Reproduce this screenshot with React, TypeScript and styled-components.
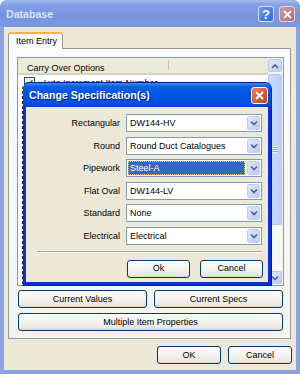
import React from 'react';
import styled, { createGlobalStyle, css } from 'styled-components';

const GlobalStyle = createGlobalStyle`
    html, body {
        margin: 0;
        padding: 0;
        background: #ffffff;
    }
    body {
        font-family: 'Liberation Sans', Arial, sans-serif;
        font-size: 9px;
        color: #000;
    }
`;

const specs = [
    { label: 'Rectangular', value: 'DW144-HV' },
    { label: 'Round', value: 'Round Duct Catalogues' },
    { label: 'Pipework', value: 'Steel-A', selected: true },
    { label: 'Flat Oval', value: 'DW144-LV' },
    { label: 'Standard', value: 'None' },
    { label: 'Electrical', value: 'Electrical' },
];

const Chevron = ({ up = false }: { up?: boolean }) => (
    <svg width='8' height='6' viewBox='0 0 8 6'>
        <polyline
            points={up ? '1,5 4,2 7,5' : '1,1.5 4,4.5 7,1.5'}
            fill='none'
            stroke='#4d6185'
            strokeWidth='1.6'
        />
    </svg>
);

const CloseGlyph = ({ size = 9 }: { size?: number }) => (
    <svg width={size} height={size} viewBox='0 0 9 9'>
        <path d='M1 1 L8 8 M8 1 L1 8' stroke='#fff' strokeWidth='1.8' />
    </svg>
);

export default function App() {
    return (
        <>
            <GlobalStyle />
            <Window>
                <TitleBar>
                    <TitleText $inactive>Database</TitleText>
                    <CaptionButtons>
                        <CaptionButton $kind='help'>?</CaptionButton>
                        <CaptionButton $kind='close-inactive'>
                            <CloseGlyph />
                        </CaptionButton>
                    </CaptionButtons>
                </TitleBar>
                <Client>
                    <TabStrip>
                        <Tab>Item Entry</Tab>
                    </TabStrip>
                    <TabPanel>
                        <ListView>
                            <ListBody>
                                <HeaderRow>
                                    <HeaderCell $width={151}>Carry Over Options</HeaderCell>
                                    <HeaderCell />
                                </HeaderRow>
                                <ListRow>
                                    <CheckBox>
                                        <svg width='7' height='7' viewBox='0 0 7 7'>
                                            <polyline
                                                points='0.5,3.5 2.5,5.5 6.5,1'
                                                fill='none'
                                                stroke='#21a121'
                                                strokeWidth='1.6'
                                            />
                                        </svg>
                                    </CheckBox>
                                    Auto Increment Item Number
                                </ListRow>
                            </ListBody>
                            <ScrollBar>
                                <ScrollButton>
                                    <Chevron up />
                                </ScrollButton>
                                <ScrollTrack>
                                    <ScrollThumb>
                                        <Grip />
                                    </ScrollThumb>
                                </ScrollTrack>
                                <ScrollButton>
                                    <Chevron />
                                </ScrollButton>
                            </ScrollBar>
                        </ListView>
                        <ButtonGrid>
                            <Button>Current Values</Button>
                            <Button>Current Specs</Button>
                            <Button $span>Multiple Item Properties</Button>
                        </ButtonGrid>
                    </TabPanel>
                    <DialogButtons>
                        <Button $width={64}>OK</Button>
                        <Button $width={64}>Cancel</Button>
                    </DialogButtons>
                </Client>

                <Modal>
                    <ModalTitleBar>
                        <TitleText>Change Specification(s)</TitleText>
                        <CaptionButton $kind='close'>
                            <CloseGlyph />
                        </CaptionButton>
                    </ModalTitleBar>
                    <ModalClient>
                        <SpecGrid>
                            {specs.map((s) => (
                                <React.Fragment key={s.label}>
                                    <SpecLabel>{s.label}</SpecLabel>
                                    <Combo>
                                        <ComboText $selected={s.selected}>{s.value}</ComboText>
                                        <ComboButton>
                                            <Chevron />
                                        </ComboButton>
                                    </Combo>
                                </React.Fragment>
                            ))}
                        </SpecGrid>
                        <Separator />
                        <ModalButtons>
                            <Button $width={63}>Ok</Button>
                            <Button $width={63}>Cancel</Button>
                        </ModalButtons>
                    </ModalClient>
                </Modal>
            </Window>
        </>
    );
}

const Window = styled.div`
    position: relative;
    width: 300px;
    height: 374px;
    display: flex;
    flex-direction: column;
    background: #8ca3e4;
    border-radius: 7px 7px 0 0;
    overflow: hidden;
`;

const TitleBar = styled.div`
    height: 27px;
    display: flex;
    align-items: center;
    justify-content: space-between;
    padding: 0 5px 0 6px;
    background: linear-gradient(#a3bbf0 0%, #839fe6 18%, #7893e0 60%, #7d99e2 100%);
`;

const TitleText = styled.span<{ $inactive?: boolean }>`
    font-family: 'Liberation Sans', Arial, sans-serif;
    font-weight: bold;
    font-size: 10.6px;
    color: ${(p) => (p.$inactive ? '#d8e4f8' : '#ffffff')};
    text-shadow: ${(p) => (p.$inactive ? 'none' : '1px 1px 0 #0a1f7a')};
`;

const CaptionButtons = styled.div`
    display: flex;
    gap: 5px;
    margin-top: 1px;
`;

const CaptionButton = styled.div<{ $kind: 'help' | 'close' | 'close-inactive' }>`
    width: 16px;
    height: 16px;
    box-sizing: border-box;
    border: 1px solid #ffffff;
    border-radius: 3px;
    display: flex;
    align-items: center;
    justify-content: center;
    color: #ffffff;
    font-weight: bold;
    font-size: 13px;
    ${(p) =>
        p.$kind === 'help'
            ? css`
                  background: linear-gradient(135deg, #6b9bf5, #2d67e0);
                  border-color: #dce6fb;
              `
            : p.$kind === 'close-inactive'
            ? css`
                  background: linear-gradient(135deg, #d49a9a, #b46a73);
                  border-color: #e7d4dc;
              `
            : css`
                  width: 17px;
                  height: 17px;
                  background: linear-gradient(135deg, #e9805f, #c5421e);
              `}
`;

const Client = styled.div`
    flex: 1;
    margin: 0 4px 4px;
    background: #ece9d8;
    display: flex;
    flex-direction: column;
    padding: 5px 5px 6px 4px;
`;

const TabStrip = styled.div`
    display: flex;
    height: 16px;
    position: relative;
    z-index: 1;
`;

const Tab = styled.div`
    width: 55px;
    height: 17px;
    box-sizing: border-box;
    border: 1px solid #919b9c;
    border-bottom: none;
    border-top: 2px solid #f7b63a;
    border-radius: 3px 3px 0 0;
    background: #fcfcfe;
    padding: 2px 0 0 7px;
`;

const TabPanel = styled.div`
    height: 291px;
    box-sizing: border-box;
    border: 1px solid #919b9c;
    background: linear-gradient(#fcfcfe, #f4f3ee);
    padding: 8px 6px 7px 8px;
    display: flex;
    flex-direction: column;
    gap: 4px;
`;

const ListView = styled.div`
    height: 229px;
    box-sizing: border-box;
    border: 1px solid #7f9db9;
    background: #ffffff;
    display: flex;
`;

const ListBody = styled.div`
    flex: 1;
    display: flex;
    flex-direction: column;
`;

const HeaderRow = styled.div`
    display: flex;
    height: 17px;
    box-sizing: border-box;
    background: #ebeadb;
    border-bottom: 2px solid #d6d2c2;
`;

const HeaderCell = styled.div<{ $width?: number }>`
    ${(p) => (p.$width ? `width: ${p.$width}px;` : 'flex: 1;')}
    box-sizing: border-box;
    padding: 3px 0 0 9px;
    border-right: ${(p) => (p.$width ? '1px solid #c7c5b2' : 'none')};
    margin: 2px 0 3px;
    line-height: 10px;
`;

const ListRow = styled.div`
    display: flex;
    align-items: flex-start;
    gap: 7px;
    height: 16px;
    padding: 3px 0 0 6px;
    line-height: 11px;
    & > span,
    & {
        white-space: nowrap;
    }
`;

const CheckBox = styled.div`
    width: 11px;
    height: 11px;
    box-sizing: border-box;
    border: 1px solid #1c5180;
    background: #f4f4f0;
    display: flex;
    align-items: center;
    justify-content: center;
    margin-top: -1px;
    margin-right: 0;
    & + * {
        margin-top: 3px;
    }
`;

const ScrollBar = styled.div`
    width: 14px;
    display: flex;
    flex-direction: column;
    background: #f7f6f0;
    padding: 1px 1px 1px 0;
`;

const ScrollButton = styled.div`
    height: 13px;
    box-sizing: border-box;
    border: 1px solid #b7caf5;
    border-radius: 2px;
    background: linear-gradient(135deg, #dfe9fe, #bccdf9);
    display: flex;
    align-items: center;
    justify-content: center;
`;

const ScrollTrack = styled.div`
    flex: 1;
    padding: 1px 0 46px;
    display: flex;
`;

const ScrollThumb = styled.div`
    flex: 1;
    box-sizing: border-box;
    border: 1px solid #b3c8f5;
    border-radius: 2px;
    background: linear-gradient(90deg, #cbdafd, #bdcffb);
    display: flex;
    align-items: center;
    justify-content: center;
    margin-top: 1px;
`;

const Grip = styled.div`
    width: 6px;
    height: 7px;
    background: repeating-linear-gradient(#eef4fe 0 1px, #8ea6e4 1px 2px);
`;

const ButtonGrid = styled.div`
    display: grid;
    grid-template-columns: 129px 129px;
    column-gap: 7px;
    row-gap: 5px;
    padding-left: 1px;
`;

const Button = styled.div<{ $span?: boolean; $width?: number }>`
    ${(p) => (p.$width ? `width: ${p.$width}px;` : '')}
    ${(p) => (p.$span ? 'grid-column: 1 / span 2;' : '')}
    height: 18px;
    box-sizing: border-box;
    border: 1px solid #003c74;
    border-radius: 3px;
    background: linear-gradient(#ffffff 0%, #f6f5f1 40%, #ebe9e2 85%, #d8d4c9 100%);
    display: flex;
    align-items: center;
    justify-content: center;
    padding-bottom: 1px;
`;

const DialogButtons = styled.div`
    display: flex;
    justify-content: flex-end;
    gap: 7px;
    margin-top: 7px;
    margin-right: -1px;
`;

const Modal = styled.div`
    position: absolute;
    left: 22px;
    top: 82px;
    width: 250px;
    height: 204px;
    box-sizing: border-box;
    background: #0831d9;
    background-clip: padding-box;
    border: 1px solid #001ea0;
    border-left: 1px dashed #111111;
    border-radius: 7px 7px 0 0;
    display: flex;
    flex-direction: column;
    z-index: 5;
`;

const ModalTitleBar = styled.div`
    height: 24px;
    display: flex;
    align-items: center;
    justify-content: space-between;
    padding: 0 3px 0 6px;
    border-radius: 6px 6px 0 0;
    background: linear-gradient(#3d8cf7 0%, #0a5fe8 15%, #0054e3 50%, #0150de 85%, #0043c9 100%);
`;

const ModalClient = styled.div`
    flex: 1;
    margin: 0 3px 3px;
    background: #ece9d8;
    display: flex;
    flex-direction: column;
    padding-top: 7px;
`;

const SpecGrid = styled.div`
    display: grid;
    grid-template-columns: 94px 136px;
    column-gap: 6px;
    row-gap: 4.6px;
    align-items: center;
`;

const SpecLabel = styled.div`
    text-align: right;
`;

const Combo = styled.div`
    height: 18px;
    box-sizing: border-box;
    border: 1px solid #7f9db9;
    background: #ffffff;
    display: flex;
    align-items: stretch;
    padding: 1px;
`;

const ComboText = styled.div<{ $selected?: boolean }>`
    flex: 1;
    display: flex;
    align-items: center;
    padding-left: 2px;
    margin-right: 2px;
    ${(p) =>
        p.$selected &&
        css`
            background: #316ac5;
            color: #ffffff;
            outline: 1px dotted #e7c37a;
            outline-offset: -1px;
        `}
`;

const ComboButton = styled.div`
    width: 13px;
    box-sizing: border-box;
    border: 1px solid #bccef7;
    border-radius: 2px;
    background: linear-gradient(135deg, #e1eafe, #b9cbf8);
    display: flex;
    align-items: center;
    justify-content: center;
`;

const Separator = styled.div`
    margin: 6px 6px 0 11px;
    height: 1px;
    background: #aca899;
    border-bottom: 1px solid #ffffff;
`;

const ModalButtons = styled.div`
    display: flex;
    justify-content: flex-end;
    gap: 10px;
    margin-top: 7px;
    padding-right: 5px;
`;
